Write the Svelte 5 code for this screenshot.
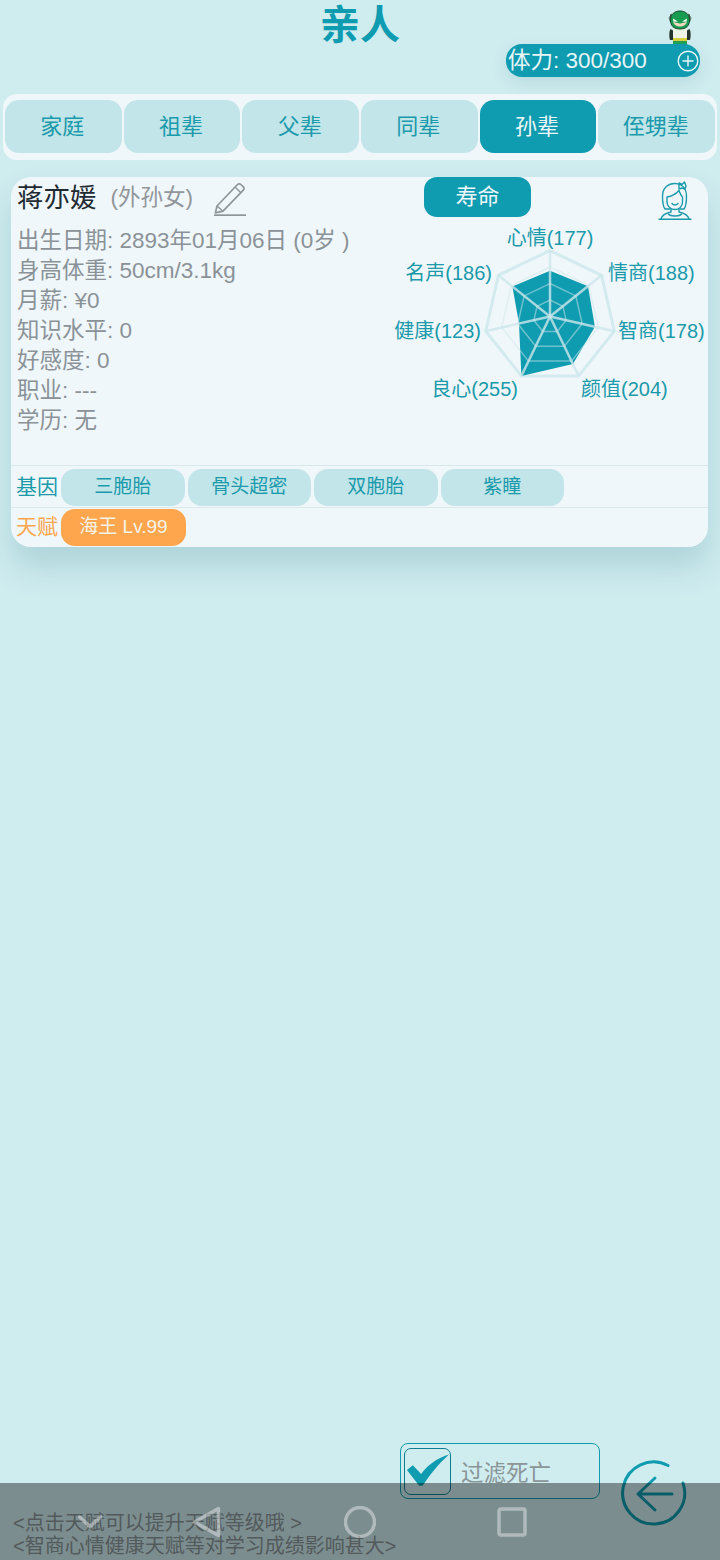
<script>
  const tabs = ['家庭', '祖辈', '父辈', '同辈', '孙辈', '侄甥辈'];
  const activeTab = '孙辈';
  const info = [
    '出生日期: 2893年01月06日 (0岁 )',
    '身高体重: 50cm/3.1kg',
    '月薪: ¥0',
    '知识水平: 0',
    '好感度: 0',
    '职业: ---',
    '学历: 无'
  ];
  const genes = ['三胞胎', '骨头超密', '双胞胎', '紫瞳'];

  // radar chart, svg origin sits at page x=380 y=217
  const cx = 170;
  const cy = 99.5;
  const R = 66;
  const stats = [
    { label: '心情', value: 177, x: 170, y: 28, anchor: 'middle' },
    { label: '情商', value: 188, x: 228, y: 63, anchor: 'start' },
    { label: '智商', value: 178, x: 238, y: 121, anchor: 'start' },
    { label: '颜值', value: 204, x: 201, y: 179, anchor: 'start' },
    { label: '良心', value: 255, x: 138, y: 179, anchor: 'end' },
    { label: '健康', value: 123, x: 101, y: 121, anchor: 'end' },
    { label: '名声', value: 186, x: 112, y: 63, anchor: 'end' }
  ];

  function point(i, r) {
    const a = (i * 2 * Math.PI) / stats.length;
    return [cx + r * Math.sin(a), cy - r * Math.cos(a)];
  }
  function ring(getR) {
    return stats.map((s, i) => point(i, getR(s)).map((n) => n.toFixed(1)).join(',')).join(' ');
  }
  const rings = [0.25, 0.5, 0.75, 1].map((f) => ring(() => R * f));
  const dataShape = ring((s) => (R * s.value) / 255);
  const spokes = stats.map((s, i) => point(i, R));
</script>

<div class="page">
  <header class="top">
    <h1>亲人</h1>
    <div class="stamina-wrap">
      <svg class="hero" viewBox="0 0 40 40" width="40" height="40">
        <path d="M10.500 21c-1.500 2-1.500 8-.5 11h3l1-9zM29.500 21c1.500 2 1.500 8 .5 11h-3l-1-9z" fill="#25352b" />
        <rect x="13" y="20" width="14" height="11" rx="2" fill="#eef3e6" />
        <rect x="13" y="30" width="14" height="3" fill="#d9cf3f" />
        <rect x="13" y="33" width="14" height="7" fill="#1f9e55" />
        <path d="M10.500 8c0-1 .5-2 1-2L9 10l1.500 4zM29.500 8c0-1-.5-2-1-2L31 10l-1.500 4z" fill="#c8d3c6" stroke="#25352b" stroke-width=".7" />
        <path d="M10.500 12C10.500 6.500 14.500 3 20 3s9.500 3.500 9.500 9c0 6-3.500 9-9.500 9s-9.500-3-9.500-9z" fill="#189c52" stroke="#14472b" stroke-width="1" />
        <path d="M13 14c2 6 12 6 14 0l-7 1.500z" fill="#f1d6bd" />
        <path d="M13 10.500l5 3-4.500.3zM27 10.500l-5 3 4.500.3z" fill="#fff" />
      </svg>
      <div class="stamina">
        <span>体力: 300/300</span>
        <svg viewBox="0 0 22 22" width="22" height="22">
          <circle cx="11" cy="11" r="9.800" fill="none" stroke="#eaf7f8" stroke-width="1.400" />
          <path d="M11 5.500v11M5.500 11h11" stroke="#eaf7f8" stroke-width="1.400" />
        </svg>
      </div>
    </div>
  </header>

  <nav class="tabs">
    {#each tabs as tab}
      <div class="tab" class:active={tab === activeTab}>{tab}</div>
    {/each}
  </nav>

  <section class="card">
    <div class="main">
      <div class="left">
        <div class="name-row">
          <span class="name">蒋亦媛</span>
          <span class="relation">(外孙女)</span>
          <svg class="pencil" viewBox="0 0 34 36" width="34" height="36">
            <path d="M4 26L24.500 4.500a2.400 2.400 0 0 1 3.400 0l2.400 2.300a2.400 2.400 0 0 1 0 3.400L10 31.200l-7.600 1.700z" fill="none" stroke="#8f9699" stroke-width="1.700" stroke-linejoin="round" />
            <path d="M22 7l6.400 6.200M4 26l6 5.200" fill="none" stroke="#8f9699" stroke-width="1.500" />
            <path d="M1 35.200h32" stroke="#8f9699" stroke-width="1.800" />
          </svg>
        </div>
        {#each info as line}
          <div class="line">{line}</div>
        {/each}
      </div>

      <div class="right">
        <div class="right-head">
          <div class="life">寿命</div>
          <svg class="avatar" viewBox="0 0 40 42" width="40" height="42" fill="none" stroke="#1a9aab" stroke-width="1.400" stroke-linecap="round" stroke-linejoin="round">
            <path d="M15 29h-5C7.500 26 7.500 21 7.500 16 7.500 8 13 3.500 20 3.500c2 0 4 .5 6 1.500 4 2.500 5.500 6 5.500 11 0 5 0 10-2.500 13h-4" />
            <path d="M12 17c4-.5 8.500-2.500 12-6.500 .8 2.500 2 5 3.500 6.500v5c0 4.500-3.500 7.500-7.500 7.500s-8-3-8-7.500z" />
            <path d="M24 3l3 1.500 2.500-2.500 1.500 4-1 3-3-1-3 1z" />
            <path d="M17 23.500c1.500 2 4.500 2 6 0" />
            <path d="M16 29.500v2.500c-5 1-9 3-10 7M24 29.500v2.500c5 1 9 3 10 7M13 33c1 4 13 4 14 0" />
            <path d="M4 39.200h32" />
          </svg>
        </div>
        <svg class="radar" viewBox="0 0 330 190" width="330" height="190">
          <polygon points={rings[3]} fill="none" stroke="#d3ebee" stroke-width="3" />
          <polygon points={dataShape} fill="#0f9bb0" />
          {#each rings.slice(0, 3) as r}
            <polygon points={r} fill="none" stroke="#cde8ec" stroke-width="1.500" opacity="0.5" />
          {/each}
          {#each spokes as [x, y]}
            <line x1={cx} y1={cy} x2={x} y2={y} stroke="#cde8ec" stroke-width="2.500" opacity="0.8" />
          {/each}
          {#each stats as s}
            <text x={s.x} y={s.y} text-anchor={s.anchor}>{s.label}({s.value})</text>
          {/each}
        </svg>
      </div>
    </div>

    <div class="row">
      <span class="row-label">基因</span>
      {#each genes as gene}
        <span class="chip">{gene}</span>
      {/each}
    </div>
    <div class="row talent">
      <span class="row-label">天赋</span>
      <span class="chip orange">海王 Lv.99</span>
    </div>
  </section>

  <footer class="bottom">
    <div class="filter">
      <span class="check">
        <svg viewBox="0 0 46 46" width="46" height="46">
          <path d="M2 21l6-5 8.500 9C23 16 32 9 45 5 34 15 26 25 18 37h-3.500z" fill="#0f9bb0" />
        </svg>
      </span>
      <span>过滤死亡</span>
    </div>
    <svg class="back" viewBox="0 0 68 68" width="68" height="68" fill="none" stroke="#0f9bb0" stroke-width="3">
      <path d="M48 5.500A31 31 0 1 0 63 23" stroke-linecap="round" />
      <path d="M18 34h34M35 18L18 34l17 16" stroke-linecap="round" stroke-linejoin="round" />
    </svg>
    <div class="hints">
      <div>&lt;点击天赋可以提升天赋等级哦 &gt;</div>
      <div>&lt;智商心情健康天赋等对学习成绩影响甚大&gt;</div>
    </div>
  </footer>

  <div class="system-bar">
    <svg viewBox="0 0 24 14" width="24" height="14" fill="none">
      <path d="M1.500 2L12 11.500 22.500 2" />
    </svg>
    <svg viewBox="0 0 30 32" width="30" height="32" fill="none">
      <path d="M26.500 2.500v27L2.500 16z" />
    </svg>
    <svg viewBox="0 0 32 32" width="32" height="32" fill="none">
      <circle cx="16" cy="16" r="14.500" />
    </svg>
    <svg viewBox="0 0 30 30" width="30" height="30" fill="none">
      <rect x="2" y="2" width="26" height="26" rx="2" />
    </svg>
  </div>
</div>

<style>
  :global(body) {
    margin: 0;
    background: #cfecef;
  }

  .page {
    position: relative;
    width: 720px;
    height: 1560px;
    overflow: hidden;
    display: flex;
    flex-direction: column;
    background: #cfecef;
    font-family: "Liberation Sans", "Noto Sans CJK SC", sans-serif;
  }

  .top {
    height: 94px;
    display: flex;
    flex-direction: column;
  }

  h1 {
    margin: 0;
    height: 50px;
    line-height: 50px;
    text-align: center;
    font-size: 40px;
    font-weight: 700;
    color: #0f9bb0;
  }

  .stamina-wrap {
    position: relative;
    align-self: flex-end;
    margin: -6px 20px 0 0;
  }

  .hero {
    position: absolute;
    top: -36px;
    right: 0;
  }

  .stamina {
    position: relative;
    width: 194px;
    height: 33px;
    box-sizing: border-box;
    padding: 0 1px 0 2px;
    display: flex;
    align-items: center;
    justify-content: space-between;
    border-radius: 16px;
    background: #0f9bb0;
    color: #e8f6f8;
    font-size: 22.500px;
    box-shadow: 0 6px 14px rgba(120, 175, 185, 0.25);
  }

  .stamina span {
    margin-bottom: 5px;
  }

  .tabs {
    margin: 0 3px;
    height: 66px;
    box-sizing: border-box;
    padding: 6px 2px 7px;
    display: flex;
    gap: 2px;
    border-radius: 14px;
    background: #f0f7fa;
  }

  .tab {
    flex: 1;
    display: flex;
    align-items: center;
    justify-content: center;
    padding: 0 2px 6px 0;
    border-radius: 14px;
    background: #c2e5e9;
    color: #1a9aab;
    font-size: 22px;
  }

  .tab.active {
    background: #0f9bb0;
    color: #eef7fa;
  }

  .card {
    margin: 17px 12px 0 11px;
    border-radius: 20px;
    background: #f0f7fa;
    box-shadow: 0 20px 30px rgba(100, 160, 170, 0.3);
  }

  .main {
    height: 288px;
    display: flex;
  }

  .left {
    width: 369px;
    margin-right: -6px;
    padding-left: 6px;
    color: #8a9298;
    font-size: 22.500px;
  }

  .name-row {
    height: 49px;
    display: flex;
    align-items: flex-start;
  }

  .name {
    margin-top: 3px;
    font-size: 26.500px;
    line-height: 36px;
    color: #1f2a33;
  }

  .relation {
    margin: 3px 0 0 14px;
    line-height: 36px;
    font-size: 22.500px;
    color: #90969a;
  }

  .pencil {
    margin: 3px 0 0 20px;
    flex: none;
  }

  .line {
    height: 30px;
    line-height: 30px;
    white-space: nowrap;
  }

  .right {
    flex: 1;
    min-width: 0;
  }

  .right-head {
    display: flex;
    align-items: flex-start;
    padding-left: 44px;
  }

  .life {
    width: 107px;
    height: 40px;
    line-height: 39px;
    text-align: center;
    border-radius: 13px;
    background: #0f9bb0;
    color: #eef7fa;
    font-size: 22px;
  }

  .avatar {
    margin: 3px 0 0 124px;
    flex: none;
  }

  .radar {
    display: block;
    margin-top: -5px;
  }

  .radar text {
    font-size: 20px;
    fill: #1a9aab;
  }

  .row {
    height: 42px;
    box-sizing: border-box;
    border-top: 1.500px solid #d9e8eb;
    padding: 3px 0 0 5px;
    display: flex;
    gap: 3px;
  }

  .row.talent {
    height: 40px;
    padding-top: 1px;
    border-top-color: #dce9ec;
  }

  .row-label {
    width: 42px;
    font-size: 21px;
    line-height: 36px;
    color: #1a9aab;
  }

  .talent .row-label {
    color: #fda64d;
  }

  .chip {
    width: 123.500px;
    height: 37px;
    line-height: 35px;
    text-align: center;
    border-radius: 14px;
    background: #c2e5e9;
    color: #1a9aab;
    font-size: 19px;
  }

  .chip.orange {
    width: 125px;
    line-height: 36px;
    background: #fda64d;
    color: #f5f3e8;
  }

  .bottom {
    margin-top: auto;
    height: 117px;
    display: grid;
    grid-template-columns: 400px 200px 1fr;
    grid-template-rows: 56px 1fr;
    color: #4b5558;
  }

  .filter {
    grid-column: 2;
    grid-row: 1;
    width: 200px;
    height: 56px;
    box-sizing: border-box;
    border: 1.500px solid #0f9bb0;
    border-radius: 8px;
    padding: 3px;
    display: flex;
    align-items: center;
    gap: 10px;
    color: #8a9598;
    font-size: 22.500px;
  }

  .check {
    width: 47px;
    height: 47px;
    box-sizing: border-box;
    border: 1.500px solid #0c7e8f;
    border-radius: 7px;
    display: flex;
  }

  .back {
    grid-column: 3;
    grid-row: 1 / span 2;
    margin: 17px 0 0 20px;
  }

  .hints {
    grid-column: 1 / span 2;
    grid-row: 2;
    padding: 13px 0 0 13px;
    font-size: 20px;
    line-height: 23px;
    color: #8a9699;
    white-space: nowrap;
  }

  .system-bar {
    position: absolute;
    left: 0;
    right: 0;
    bottom: 0;
    height: 77px;
    box-sizing: border-box;
    padding-left: 78px;
    display: flex;
    align-items: center;
    gap: 90px;
    background: rgba(0, 0, 0, 0.4);
  }

  .system-bar svg {
    stroke: rgba(255, 255, 255, 0.4);
    stroke-width: 3.500;
    stroke-linejoin: round;
    stroke-linecap: round;
    margin-top: 1px;
  }

  .system-bar svg:nth-child(3) {
    margin-left: 32px;
  }

  .system-bar svg:nth-child(4) {
    margin-left: 31px;
  }
</style>
